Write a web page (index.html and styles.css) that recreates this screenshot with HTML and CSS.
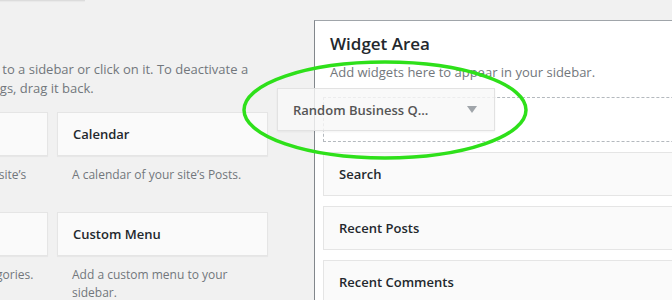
FILE: index.html
```html
<!DOCTYPE html>
<html lang="en">
<head>
  <meta charset="UTF-8" />
  <title>Widgets</title>
  <link rel="stylesheet" href="styles.css">
</head>
<body>
  <div class="screen">
    <div class="available">
      <div class="topbar"></div>
      <p class="intro">To activate a widget drag it to a sidebar or click on it. To deactivate a widget and delete its settings, drag it back.</p>
      <div class="widget-grid">
        <div class="widget">
          <div class="widget-top"><h3>Archives</h3></div>
          <p class="widget-desc">A monthly archive of your site’s Posts.</p>
        </div>
        <div class="widget">
          <div class="widget-top"><h3>Calendar</h3></div>
          <p class="widget-desc">A calendar of your site’s Posts.</p>
        </div>
        <div class="widget">
          <div class="widget-top"><h3>Categories</h3></div>
          <p class="widget-desc">A list or dropdown of categories.</p>
        </div>
        <div class="widget">
          <div class="widget-top"><h3>Custom Menu</h3></div>
          <p class="widget-desc">Add a custom menu to your sidebar.</p>
        </div>
      </div>
    </div>

    <div class="sidebar-holder">
      <h2>Widget Area</h2>
      <p class="sidebar-desc">Add widgets here to appear in your sidebar.</p>
      <div class="placeholder"></div>
      <div class="sidebar-widget"><h3>Search</h3></div>
      <div class="sidebar-widget"><h3>Recent Posts</h3></div>
      <div class="sidebar-widget"><h3>Recent Comments</h3></div>
    </div>

    <div class="dragging">
      <h3>Random Business Q...</h3>
      <span class="arrow"></span>
    </div>

    <svg class="annotation" width="672" height="300" viewBox="0 0 672 300">
      <ellipse cx="385" cy="110" rx="141" ry="48" fill="none" stroke="#2ee01a" stroke-width="3.5" />
    </svg>
  </div>
</body>
</html>
```

FILE: styles.css
```css
* {
  box-sizing: border-box;
}
body {
  margin: 0;
  background: #f1f1f1;
  font-family: 'Open Sans', 'Noto Sans', sans-serif;
  font-size: 13px;
  color: #444;
}
h2, h3, p {
  margin: 0;
}
.screen {
  position: relative;
  display: flex;
  align-items: flex-start;
  width: 672px;
  height: 300px;
  overflow: hidden;
}
.available {
  flex-shrink: 0;
  width: 431px;
  margin-left: -163px;
}
.topbar {
  width: 248px;
  height: 1px;
  background: #dcdcdc;
  box-shadow: 0 1px 1px rgba(0, 0, 0, 0.04);
}
.intro {
  margin-top: 59px;
  line-height: 19px;
  color: #72777c;
}
.widget-grid {
  display: grid;
  grid-template-columns: 211px 211px;
  column-gap: 9px;
  row-gap: 10px;
  margin-top: 14px;
}
.widget-top {
  height: 44px;
  padding: 0 15px;
  display: flex;
  align-items: center;
  background: #fafafa;
  border: 1px solid #e5e5e5;
  box-shadow: 0 1px 1px rgba(0, 0, 0, 0.04);
}
h3 {
  font-size: 13px;
  font-weight: 600;
  color: #23282d;
}
.widget-desc {
  padding: 10px 10px 0 15px;
  font-size: 12px;
  line-height: 18px;
  color: #72777c;
}
.sidebar-holder {
  flex-shrink: 0;
  width: 420px;
  height: 300px;
  margin-top: 20px;
  margin-left: 46px;
  padding: 0 0 0 8px;
  background: #fff;
  border-top: 1px solid #a0a5aa;
  border-left: 1px solid #82878c;
}
.sidebar-holder h2 {
  margin: 11px 0 0 7px;
  font-size: 17px;
  font-weight: 600;
  line-height: 24px;
  color: #23282d;
}
.sidebar-desc {
  margin: 7px 0 0 7px;
  line-height: 18px;
  color: #72777c;
}
.placeholder {
  height: 45px;
  margin-top: 16px;
  border: 1px dashed #b4b9be;
}
.sidebar-widget {
  height: 44px;
  margin-top: 10px;
  padding: 0 15px;
  display: flex;
  align-items: center;
  background: #fafafa;
  border: 1px solid #e5e5e5;
}
.dragging {
  position: absolute;
  left: 277px;
  top: 88px;
  width: 218px;
  height: 43px;
  padding: 0 15px;
  display: flex;
  align-items: center;
  justify-content: space-between;
  background: rgba(248, 248, 248, 0.82);
  border: 1px solid rgba(220, 220, 220, 0.8);
  box-shadow: 0 1px 2px rgba(0, 0, 0, 0.05);
}
.dragging h3 {
  color: #555;
}
.arrow {
  margin-right: 2px;
  border-left: 5px solid transparent;
  border-right: 5px solid transparent;
  border-top: 7px solid #a0a5aa;
}
.annotation {
  position: absolute;
  left: 0;
  top: 0;
  pointer-events: none;
}
```
